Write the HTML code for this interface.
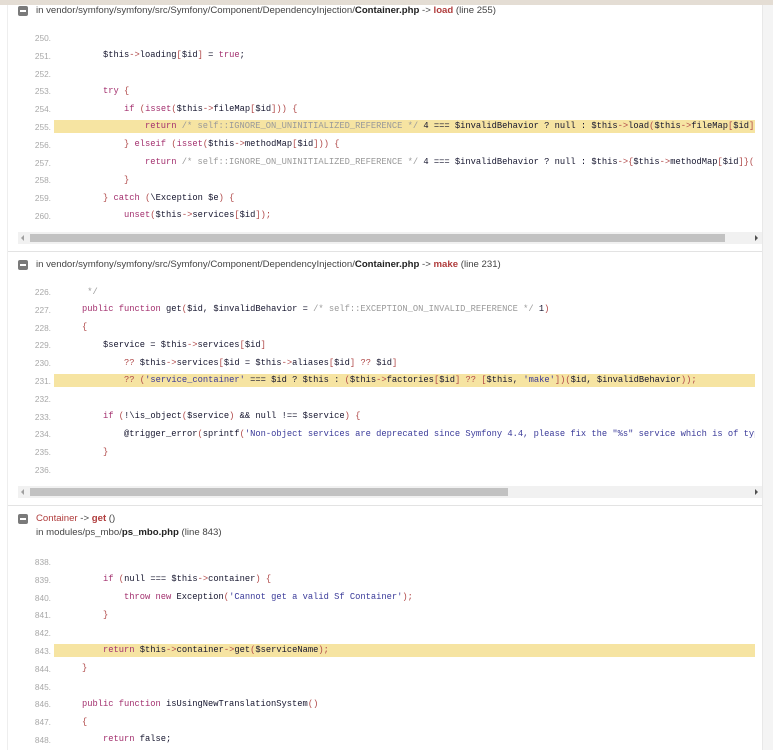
<!DOCTYPE html>
<html><head><meta charset="utf-8"><style>
*{margin:0;padding:0;box-sizing:border-box}
body{width:773px;height:750px;overflow:hidden;background:#fff;position:relative;font-family:"Liberation Sans",sans-serif}
.top{position:absolute;left:0;top:0;width:773px;height:5px;background:#e4ddd4}
.rs{position:absolute;left:762px;top:5px;width:11px;height:745px;background:#f4f4f4;border-left:1px solid #e8e8e8}
.ls{position:absolute;left:7px;top:5px;width:1px;height:745px;background:#eee}
.sep{position:absolute;left:8px;width:754px;height:1px;background:#e3e3e3}
.hd{position:absolute;left:36px;font-size:9.6px;color:#444;line-height:12px;white-space:nowrap}
.hd b{color:#222}
.hd .f{color:#b03c3c;font-weight:bold}
.ico{position:absolute;left:18px;width:10px;height:10px;background:#7a7a7a;border-radius:2px}
.ico:after{content:"";position:absolute;left:2px;top:4px;width:6px;height:2px;background:#fff}
.code{position:absolute;left:0;width:762px}
.ln{position:relative;height:17.8px}
.n{position:absolute;left:20px;width:31px;text-align:right;top:4px;font-size:8.3px;color:#a8a8a8;line-height:10px}
.c{position:absolute;left:54px;width:701px;top:2.5px;height:13px;overflow:hidden;white-space:pre;font-family:"Liberation Mono",monospace;font-size:8.75px;line-height:13px;padding-left:7px;color:#15152e}
.hl .c{background:#f6e4a2}
.k{color:#a3306e}.p{color:#b04848}.cm{color:#9a9a9a}.s{color:#3a3a99}
.sb{position:absolute;left:18px;width:744px;height:12px;background:#f1f1f1}
.th{position:absolute;left:12px;top:2px;height:8px;background:#c2c2c2}
.al,.ar{position:absolute;top:3px;width:0;height:0;border-top:3px solid transparent;border-bottom:3px solid transparent}
.al{left:3px;border-right:3px solid #a0a0a0}
.ar{right:4px;border-left:3px solid #505050}
</style></head><body>
<div class="top"></div><div class="ls"></div><div class="rs"></div>

<div class="ico" style="top:6px"></div>
<div class="hd" style="top:5px">in vendor/symfony/symfony/src/Symfony/Component/DependencyInjection/<b>Container.php</b> -&gt; <span class="f">load</span> (line 255)</div>
<div class="code" style="top:29px">
<div class="ln"><span class="n">250.</span><span class="c"> </span></div>
<div class="ln"><span class="n">251.</span><span class="c">        $this<span class="p">-&gt;</span>loading<span class="p">[</span>$id<span class="p">]</span> = <span class="k">true</span>;</span></div>
<div class="ln"><span class="n">252.</span><span class="c"> </span></div>
<div class="ln"><span class="n">253.</span><span class="c">        <span class="k">try</span> <span class="p">{</span></span></div>
<div class="ln"><span class="n">254.</span><span class="c">            <span class="k">if</span> <span class="p">(</span><span class="k">isset</span><span class="p">(</span>$this<span class="p">-&gt;</span>fileMap<span class="p">[</span>$id<span class="p">]))</span> <span class="p">{</span></span></div>
<div class="ln hl"><span class="n">255.</span><span class="c">                <span class="k">return</span> <span class="cm">/* self::IGNORE_ON_UNINITIALIZED_REFERENCE */</span> 4 === $invalidBehavior ? null : $this<span class="p">-&gt;</span>load<span class="p">(</span>$this<span class="p">-&gt;</span>fileMap<span class="p">[</span>$id<span class="p">]);</span></span></div>
<div class="ln"><span class="n">256.</span><span class="c">            <span class="p">}</span> <span class="k">elseif</span> <span class="p">(</span><span class="k">isset</span><span class="p">(</span>$this<span class="p">-&gt;</span>methodMap<span class="p">[</span>$id<span class="p">]))</span> <span class="p">{</span></span></div>
<div class="ln"><span class="n">257.</span><span class="c">                <span class="k">return</span> <span class="cm">/* self::IGNORE_ON_UNINITIALIZED_REFERENCE */</span> 4 === $invalidBehavior ? null : $this<span class="p">-&gt;{</span>$this<span class="p">-&gt;</span>methodMap<span class="p">[</span>$id<span class="p">]}(</span>);</span></div>
<div class="ln"><span class="n">258.</span><span class="c">            <span class="p">}</span></span></div>
<div class="ln"><span class="n">259.</span><span class="c">        <span class="p">}</span> <span class="k">catch</span> <span class="p">(</span>\Exception $e<span class="p">)</span> <span class="p">{</span></span></div>
<div class="ln"><span class="n">260.</span><span class="c">            <span class="k">unset</span><span class="p">(</span>$this<span class="p">-&gt;</span>services<span class="p">[</span>$id<span class="p">]);</span></span></div>
</div>
<div class="sb" style="top:232px"><div class="al"></div><div class="th" style="width:695px"></div><div class="ar"></div></div>
<div class="sep" style="top:251px"></div>

<div class="ico" style="top:260px"></div>
<div class="hd" style="top:259px">in vendor/symfony/symfony/src/Symfony/Component/DependencyInjection/<b>Container.php</b> -&gt; <span class="f">make</span> (line 231)</div>
<div class="code" style="top:283px">
<div class="ln"><span class="n">226.</span><span class="c">     <span class="cm">*/</span></span></div>
<div class="ln"><span class="n">227.</span><span class="c">    <span class="k">public function</span> get<span class="p">(</span>$id, $invalidBehavior = <span class="cm">/* self::EXCEPTION_ON_INVALID_REFERENCE */</span> 1<span class="p">)</span></span></div>
<div class="ln"><span class="n">228.</span><span class="c">    <span class="p">{</span></span></div>
<div class="ln"><span class="n">229.</span><span class="c">        $service = $this<span class="p">-&gt;</span>services<span class="p">[</span>$id<span class="p">]</span></span></div>
<div class="ln"><span class="n">230.</span><span class="c">            <span class="p">??</span> $this<span class="p">-&gt;</span>services<span class="p">[</span>$id = $this<span class="p">-&gt;</span>aliases<span class="p">[</span>$id<span class="p">]</span> <span class="p">??</span> $id<span class="p">]</span></span></div>
<div class="ln hl"><span class="n">231.</span><span class="c">            <span class="p">??</span> <span class="p">(</span><span class="s">'service_container'</span> === $id ? $this : <span class="p">(</span>$this<span class="p">-&gt;</span>factories<span class="p">[</span>$id<span class="p">]</span> <span class="p">??</span> <span class="p">[</span>$this, <span class="s">'make'</span><span class="p">])(</span>$id, $invalidBehavior<span class="p">));</span></span></div>
<div class="ln"><span class="n">232.</span><span class="c"> </span></div>
<div class="ln"><span class="n">233.</span><span class="c">        <span class="k">if</span> <span class="p">(</span>!\is_object<span class="p">(</span>$service<span class="p">)</span> &amp;&amp; null !== $service<span class="p">)</span> <span class="p">{</span></span></div>
<div class="ln"><span class="n">234.</span><span class="c">            @trigger_error<span class="p">(</span>sprintf<span class="p">(</span><span class="s">'Non-object services are deprecated since Symfony 4.4, please fix the "%s" service which is of type'</span></span></div>
<div class="ln"><span class="n">235.</span><span class="c">        <span class="p">}</span></span></div>
<div class="ln"><span class="n">236.</span><span class="c"> </span></div>
</div>
<div class="sb" style="top:486px"><div class="al"></div><div class="th" style="width:478px"></div><div class="ar"></div></div>
<div class="sep" style="top:505px"></div>

<div class="ico" style="top:514px"></div>
<div class="hd" style="top:513px"><span style="color:#b03c3c">Container</span> -&gt; <span class="f">get</span> ()</div>
<div class="hd" style="top:527px">in modules/ps_mbo/<b>ps_mbo.php</b> (line 843)</div>
<div class="code" style="top:553px">
<div class="ln"><span class="n">838.</span><span class="c"> </span></div>
<div class="ln"><span class="n">839.</span><span class="c">        <span class="k">if</span> <span class="p">(</span>null === $this<span class="p">-&gt;</span>container<span class="p">)</span> <span class="p">{</span></span></div>
<div class="ln"><span class="n">840.</span><span class="c">            <span class="k">throw new</span> Exception<span class="p">(</span><span class="s">'Cannot get a valid Sf Container'</span><span class="p">);</span></span></div>
<div class="ln"><span class="n">841.</span><span class="c">        <span class="p">}</span></span></div>
<div class="ln"><span class="n">842.</span><span class="c"> </span></div>
<div class="ln hl"><span class="n">843.</span><span class="c">        <span class="k">return</span> $this<span class="p">-&gt;</span>container<span class="p">-&gt;</span>get<span class="p">(</span>$serviceName<span class="p">);</span></span></div>
<div class="ln"><span class="n">844.</span><span class="c">    <span class="p">}</span></span></div>
<div class="ln"><span class="n">845.</span><span class="c"> </span></div>
<div class="ln"><span class="n">846.</span><span class="c">    <span class="k">public function</span> isUsingNewTranslationSystem<span class="p">()</span></span></div>
<div class="ln"><span class="n">847.</span><span class="c">    <span class="p">{</span></span></div>
<div class="ln"><span class="n">848.</span><span class="c">        <span class="k">return</span> false;</span></div>
</div>
</body></html>
